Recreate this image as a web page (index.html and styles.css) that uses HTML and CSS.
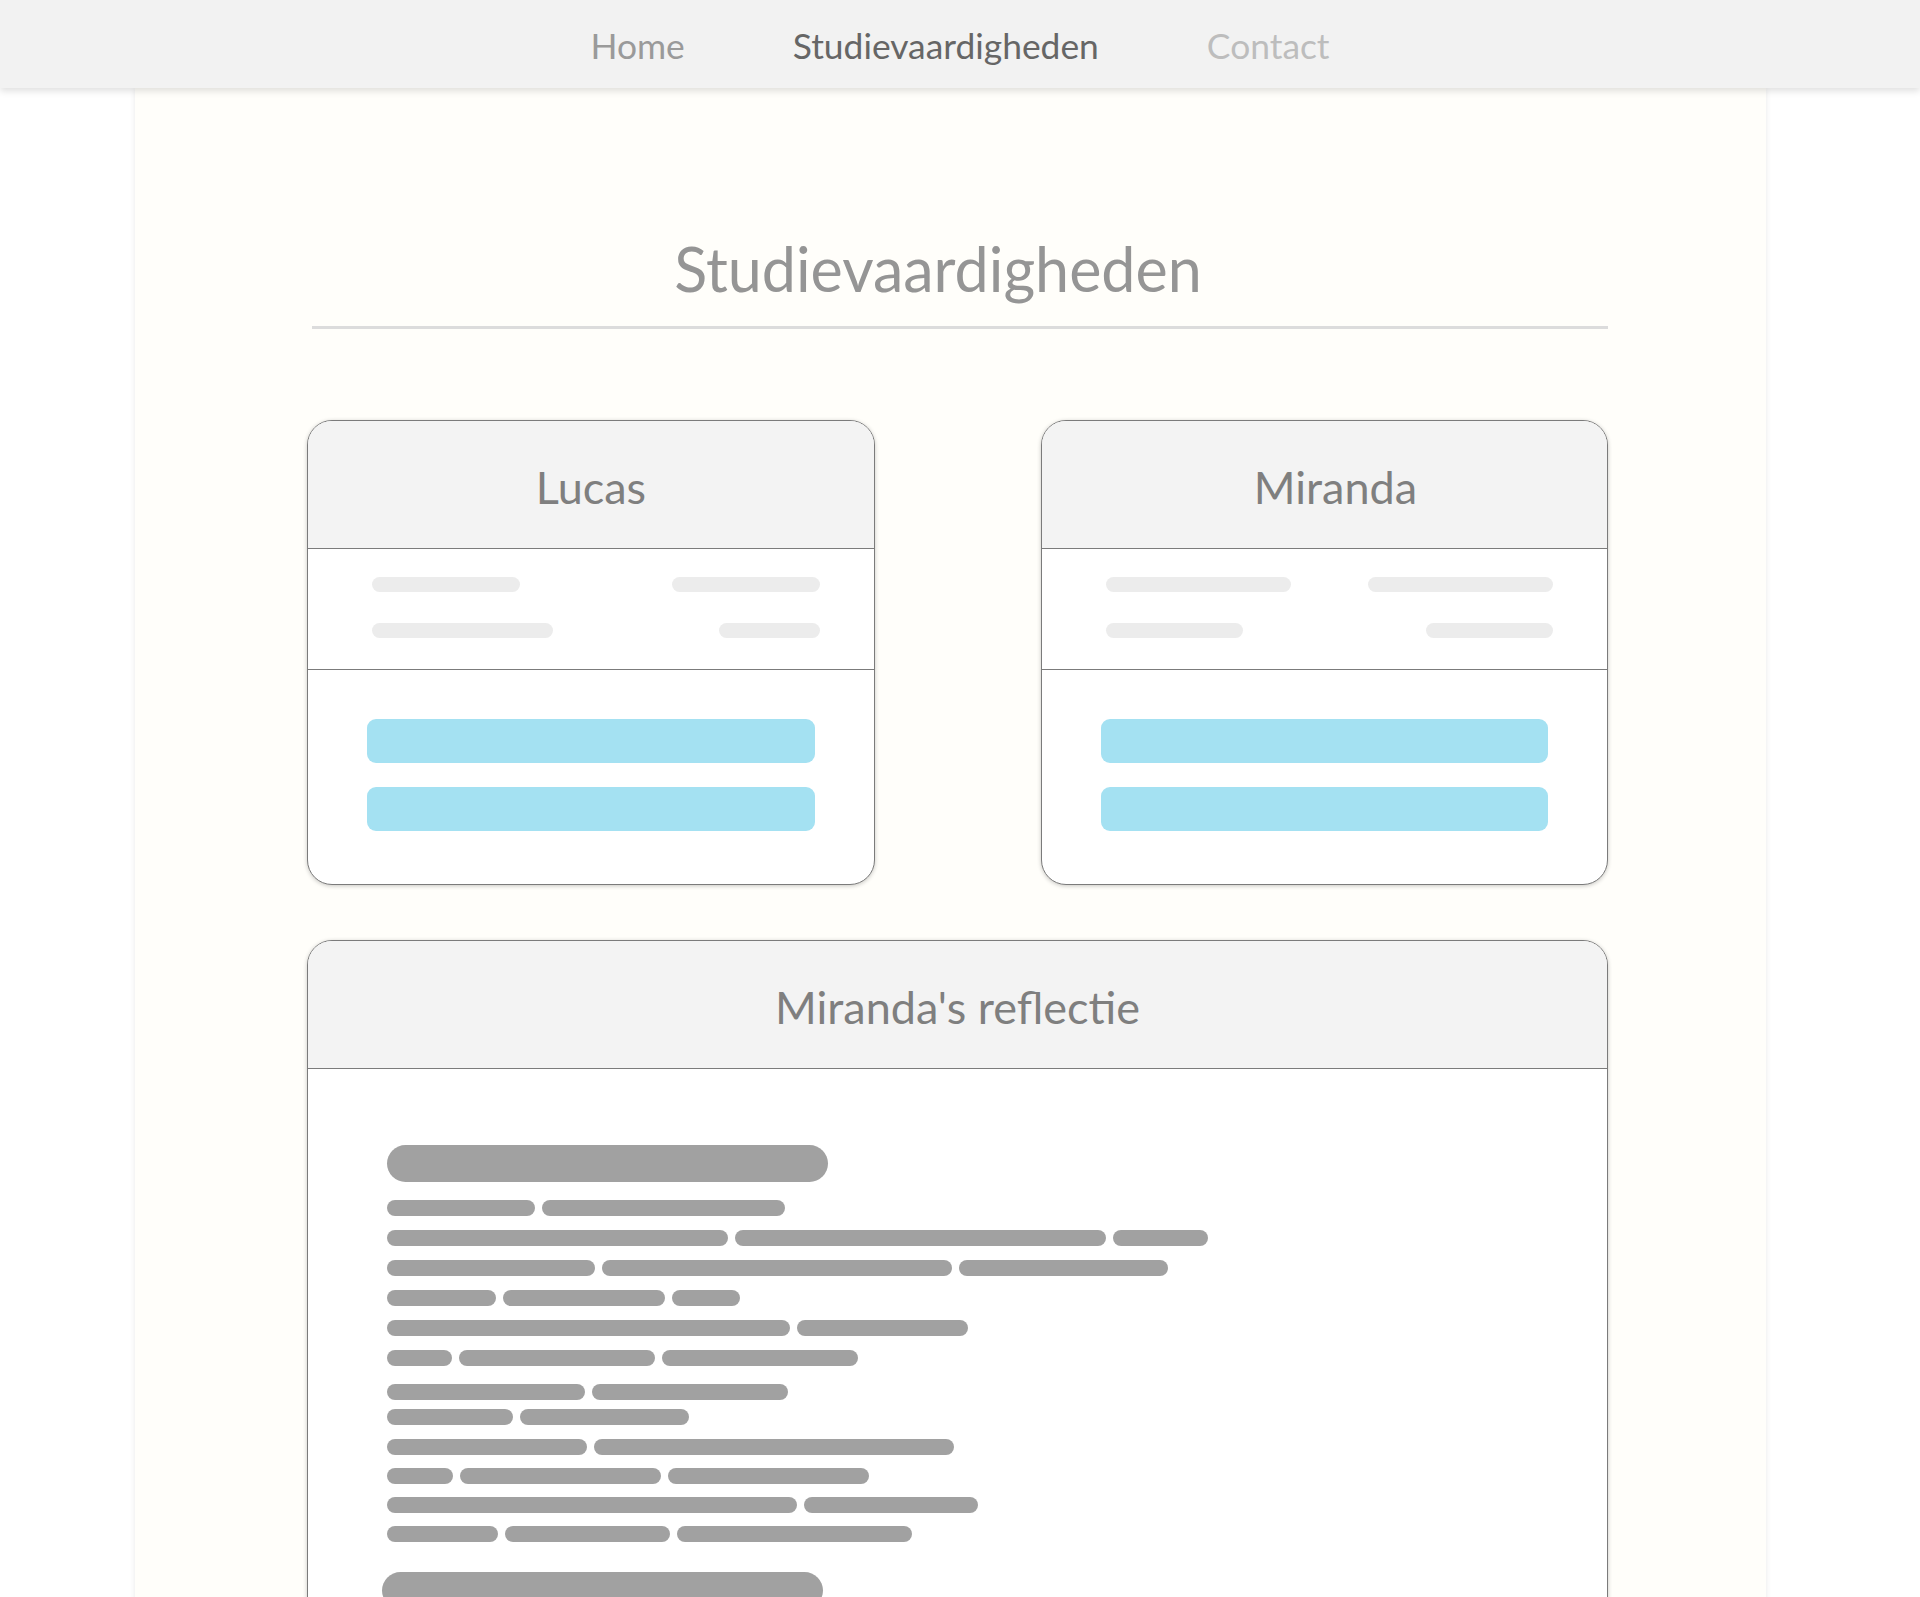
FILE: index.html
```html
<!DOCTYPE html>
<html lang="nl">
<head>
<meta charset="utf-8">
<title>Studievaardigheden</title>
<link rel="stylesheet" href="styles.css">
</head>
<body>
<nav class="topnav">
  <a class="nav-link" href="#">Home</a>
  <a class="nav-link active" href="#">Studievaardigheden</a>
  <a class="nav-link muted" href="#">Contact</a>
</nav>
<main class="page">
  <div class="content">
    <h1 class="page-title">Studievaardigheden</h1>

    <section class="student-grid">
      <article class="card">
        <header class="card-head"><h2 class="card-title">Lucas</h2></header>
        <div class="card-stats">
          <div class="stat-row"><span class="sk" style="width:148px"></span><span class="sk" style="width:148px"></span></div>
          <div class="stat-row"><span class="sk" style="width:181px"></span><span class="sk" style="width:101px"></span></div>
        </div>
        <div class="card-actions">
          <span class="action-bar"></span>
          <span class="action-bar"></span>
        </div>
      </article>

      <article class="card">
        <header class="card-head"><h2 class="card-title offset">Miranda</h2></header>
        <div class="card-stats">
          <div class="stat-row"><span class="sk" style="width:185px"></span><span class="sk" style="width:185px"></span></div>
          <div class="stat-row"><span class="sk" style="width:137px"></span><span class="sk" style="width:127px"></span></div>
        </div>
        <div class="card-actions">
          <span class="action-bar"></span>
          <span class="action-bar"></span>
        </div>
      </article>
    </section>

    <article class="card reflection">
      <header class="card-head"><h2 class="card-title">Miranda's reflectie</h2></header>
      <div class="reflection-body">
        <div class="sk-heading"></div>
        <div class="para lines-a">
          <div class="line"><span class="word" style="width:148px"></span><span class="word" style="width:243px"></span></div>
          <div class="line"><span class="word" style="width:341px"></span><span class="word" style="width:371px"></span><span class="word" style="width:95px"></span></div>
          <div class="line"><span class="word" style="width:208px"></span><span class="word" style="width:350px"></span><span class="word" style="width:209px"></span></div>
          <div class="line"><span class="word" style="width:109px"></span><span class="word" style="width:162px"></span><span class="word" style="width:68px"></span></div>
          <div class="line"><span class="word" style="width:403px"></span><span class="word" style="width:171px"></span></div>
          <div class="line"><span class="word" style="width:65px"></span><span class="word" style="width:196px"></span><span class="word" style="width:196px"></span></div>
        </div>
        <div class="para lines-b">
          <div class="line"><span class="word" style="width:198px"></span><span class="word" style="width:196px"></span></div>
          <div class="line"><span class="word" style="width:126px"></span><span class="word" style="width:169px"></span></div>
        </div>
        <div class="para lines-c">
          <div class="line"><span class="word" style="width:200px"></span><span class="word" style="width:360px"></span></div>
          <div class="line"><span class="word" style="width:66px"></span><span class="word" style="width:201px"></span><span class="word" style="width:201px"></span></div>
          <div class="line"><span class="word" style="width:410px"></span><span class="word" style="width:174px"></span></div>
          <div class="line"><span class="word" style="width:111px"></span><span class="word" style="width:165px"></span><span class="word" style="width:235px"></span></div>
        </div>
        <div class="sk-heading shifted"></div>
        <div class="para lines-a">
          <div class="line"><span class="word" style="width:160px"></span><span class="word" style="width:230px"></span></div>
          <div class="line"><span class="word" style="width:320px"></span><span class="word" style="width:280px"></span></div>
        </div>
      </div>
    </article>
  </div>
</main>
</body>
</html>
```

FILE: styles.css
```css
* {
  box-sizing: border-box;
}

html, body {
  margin: 0;
  padding: 0;
  background: #ffffff;
  font-family: "Lato", "Noto Sans", "Liberation Sans", sans-serif;
}

/* ---------- top navigation ---------- */
.topnav {
  position: relative;
  z-index: 2;
  height: 88px;
  padding-top: 25px;
  background: #f2f2f2;
  box-shadow: 0 3px 7px rgba(0, 0, 0, 0.13);
  display: flex;
  justify-content: center;
  align-items: flex-start;
  gap: 108px;
}

.nav-link {
  font-size: 35.4px;
  line-height: 42px;
  color: #9a9a9a;
  text-decoration: none;
}

.nav-link.active {
  color: #666666;
}

.nav-link.muted {
  color: #bdbdbd;
}

/* ---------- page column ---------- */
.page {
  width: 1631px;
  margin: 0 154px 0 135px;
  min-height: 1700px;
  background: #fffefa;
  box-shadow: 0 0 6px rgba(0, 0, 0, 0.09);
  padding: 145px 158px 80px 172px;
}

.content {
  display: flex;
  flex-direction: column;
}

.page-title {
  margin: 0 0 0 5px;
  padding: 0 44px 21px 0;
  font-size: 61px;
  font-weight: 400;
  line-height: 72px;
  color: #959595;
  text-align: center;
  border-bottom: 3px solid #dcdcdc;
}

/* ---------- cards ---------- */
.student-grid {
  margin-top: 91px;
  display: grid;
  grid-template-columns: 568px 567px;
  column-gap: 166px;
}

.card {
  background: #ffffff;
  border: 1px solid #7b7b7b;
  border-radius: 25px;
  box-shadow: 0 1px 4px rgba(0, 0, 0, 0.22);
  overflow: hidden;
}

.card-head {
  height: 128px;
  padding-top: 5px;
  background: #f3f3f3;
  border-bottom: 1px solid #7b7b7b;
  display: flex;
  align-items: center;
  justify-content: center;
}

.card-title {
  margin: 0;
  font-size: 45px;
  font-weight: 400;
  line-height: 53px;
  color: #7f7f7f;
}

.card-title.offset {
  padding-left: 22px;
}

.card-stats {
  padding: 28px 54px 31px 64px;
  border-bottom: 1px solid #7b7b7b;
  display: flex;
  flex-direction: column;
  gap: 31px;
}

.stat-row {
  display: flex;
  justify-content: space-between;
}

.sk {
  display: block;
  height: 15px;
  border-radius: 8px;
  background: #ececec;
}

.card-actions {
  padding: 49px 59px 53px 59px;
  display: flex;
  flex-direction: column;
  gap: 24px;
}

.action-bar {
  display: block;
  height: 44px;
  border-radius: 9px;
  background: #a4e1f2;
}

/* ---------- reflection ---------- */
.reflection {
  margin-top: 55px;
  border-bottom-left-radius: 0;
  border-bottom-right-radius: 0;
}

.reflection-body {
  padding: 76px 79px 60px 79px;
  display: flex;
  flex-direction: column;
}

.sk-heading {
  width: 441px;
  height: 37px;
  border-radius: 19px;
  background: #a1a1a1;
}

.sk-heading.shifted {
  margin-left: -5px;
  margin-top: 30px;
}

.para {
  display: flex;
  flex-direction: column;
  margin-top: 18px;
}

.lines-a { gap: 14px; }
.lines-b { gap: 9px; }
.lines-c { gap: 13px; margin-top: 14px; }

.line {
  display: flex;
  gap: 7px;
}

.word {
  display: block;
  height: 16px;
  border-radius: 8px;
  background: #a1a1a1;
}
```
